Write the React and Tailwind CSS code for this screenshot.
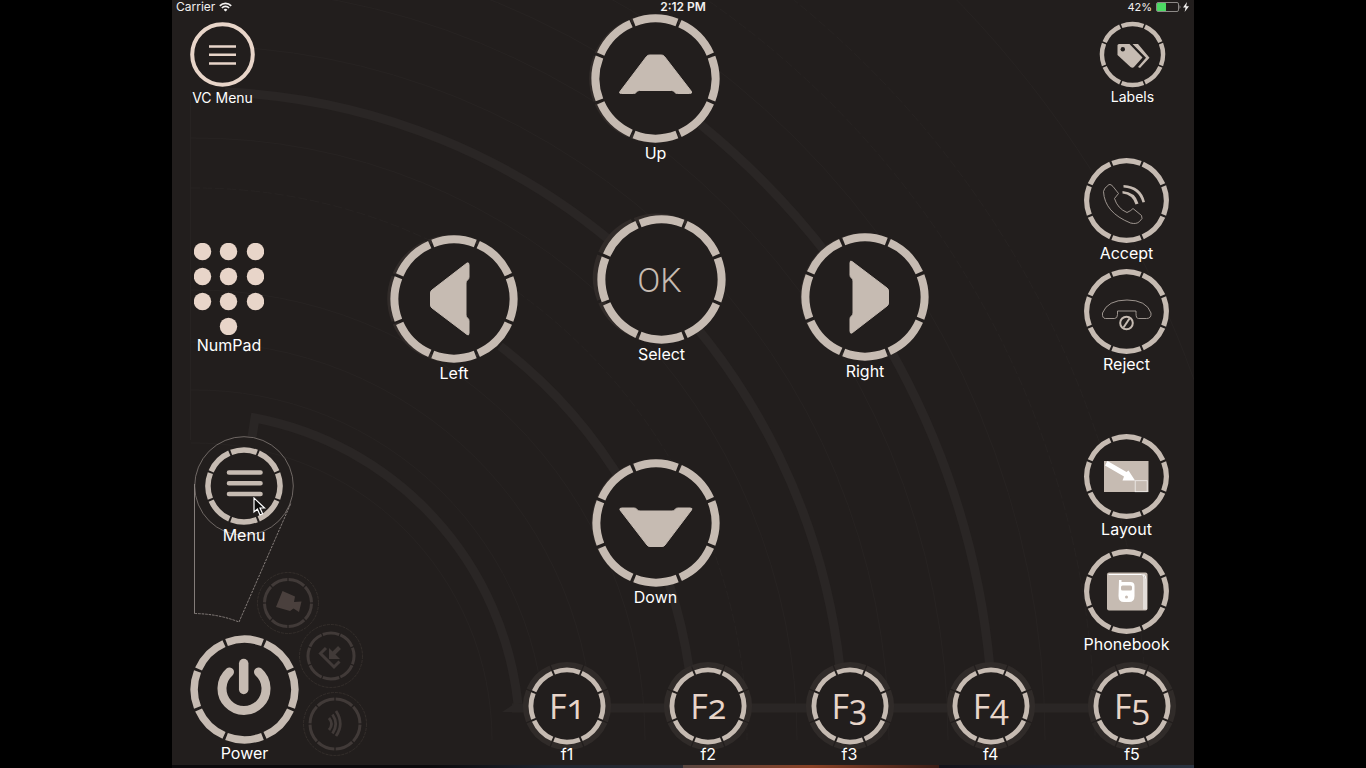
import React from "react";

const SAND = "#c6bbb2";
const PEACH = "#e8d5c9";
const DIM = "#413a38";

function Ring({ size, r, w, color = SAND, turn = 22.5, halo, shade, className = "", children }) {
  const h = size / 2;
  return (
    <svg
      viewBox={`${-h} ${-h} ${size} ${size}`}
      width={size}
      height={size}
      overflow="visible"
      aria-hidden="true"
      className={`col-start-1 row-start-1 block ${className}`}
    >
      {shade && (
        <circle cx={shade[0]} cy={shade[1]} r={r} fill="none" stroke="#312b29" strokeWidth={w} pathLength="800" strokeDasharray="94 6" strokeDashoffset="-3" transform={`rotate(${turn})`} />
      )}
      {halo && (
        <circle r={halo} fill="none" stroke="#302b29" strokeWidth="6" pathLength="800" strokeDasharray="96 4" strokeDashoffset="-2" transform={`rotate(${turn})`} />
      )}
      <circle r={r} fill="#221e1d" stroke="none" />
      <circle r={r} fill="none" stroke={color} strokeWidth={w} pathLength="800" strokeDasharray="93 7" strokeDashoffset="-3.5" transform={`rotate(${turn})`} />
      {children}
    </svg>
  );
}

function Key({ label, className = "", labelClass = "text-base leading-5", children }) {
  return (
    <button type="button" className={`flex flex-col items-center text-white ${className}`}>
      <span className="grid place-items-center">{children}</span>
      <span className={`relative whitespace-nowrap ${labelClass}`}>{label}</span>
    </button>
  );
}

function Arrow({ angle }) {
  return (
    <path
      transform={`rotate(${angle})`}
      d="M-6 -23.500 H6 Q8 -23.500 9 -22 L36 13 Q37 15 34 15 H22 Q20 15 19 13.500 Q18 12 16 12 H-16 Q-18 12 -19 13.500 Q-20 15 -22 15 H-34 Q-37 15 -35.500 13 L-9 -22 Q-8 -23.500 -6 -23.500 Z"
      fill={SAND}
      stroke={SAND}
      strokeWidth="1"
      strokeLinejoin="round"
    />
  );
}

function Backdrop() {
  const thin = [297, 350, 398, 450, 552, 602, 647, 694, 753, 797, 850, 900, 952, 1062];
  return (
    <svg viewBox="172 0 1022 768" preserveAspectRatio="xMidYMid slice" className="absolute inset-0 h-full w-full" aria-hidden="true" fill="none">
      <g stroke="#272322" strokeWidth="1">
        {thin.map((r) => (
          <path key={r} d={`M191 ${740 - r} A${r} ${r} 0 0 1 ${195 + r} 740`} strokeDasharray={r % 4 ? undefined : "9 3"} />
        ))}
        <path d="M190.500 90 V440" />
      </g>
      <g stroke="#2a2625" strokeWidth="9">
        <path d="M252 437 L255 418 A326 326 0 0 1 518 704" />
        <path d="M500 346 A498 498 0 0 1 689 668" />
        <path d="M225 92 A647 647 0 0 1 840 668" />
        <path d="M700 124 A797 797 0 0 1 990 668" />
        <path d="M512 708 H1132" />
      </g>
      <path d="M502 712 L514 704 V712 Z" fill="#2a2625" />
    </svg>
  );
}

function StatusBar() {
  return (
    <header className="relative grid h-3.5 grid-cols-3 items-center px-1 text-xs leading-3.5 text-[#f2f0ef]">
      <div className="flex items-center gap-1">
        <span>Carrier</span>
        <svg width="13" height="10" viewBox="0 0 13 10" fill="none" stroke="#f4f2f1" strokeWidth="1.700" aria-label="Wi-Fi">
          <path d="M0.800 3.800 A8 8 0 0 1 12.200 3.800" />
          <path d="M2.900 6 A5 5 0 0 1 10.100 6" />
          <path d="M6.500 9.600 L4.600 7.700 A2.700 2.700 0 0 1 8.400 7.700 Z" fill="#f4f2f1" stroke="none" />
        </svg>
      </div>
      <div className="text-center font-semibold">2:12 PM</div>
      <div className="flex items-center justify-end gap-1">
        <span className="text-[11px]">42%</span>
        <svg width="34" height="10" viewBox="0 0 34 10" aria-label="Battery">
          <rect x="0.500" y="0.500" width="22" height="9" rx="1.500" fill="none" stroke="#8d8987" />
          <rect x="1" y="1" width="9" height="8" rx="0.500" fill="#4cd964" />
          <path d="M23.500 3 Q25.500 5 23.500 7 Z" fill="#8d8987" />
          <path d="M31 0 L27 5.600 H29.600 L28.600 10 L33 4.200 H30.200 Z" fill="#f4f2f1" />
        </svg>
      </div>
    </header>
  );
}

function LeftRail() {
  return (
    <nav aria-label="System" className="flex w-[195px] shrink-0 flex-col items-start pt-2 pl-[18px]">
      <Key label="VC Menu" labelClass="text-sm leading-5">
        <svg width="65" height="66" viewBox="-32.500 -32.500 65 66" aria-hidden="true">
          <circle r="30.300" fill="#221e1d" stroke={PEACH} strokeWidth="4" />
          <path d="M-13.500 -8 H13.500 M-13.500 0.200 H13.500 M-13.500 9 H13.500" stroke={PEACH} strokeWidth="2.600" />
        </svg>
      </Key>

      <Key label="NumPad" className="mt-[135px] ml-1">
        <svg width="70" height="92" viewBox="194 243 70 92" fill={PEACH} aria-hidden="true">
          {[251.5, 276.5, 301.5].map((y) =>
            [202.5, 228.5, 255.5].map((x) => <circle key={`${x}-${y}`} cx={x} cy={y} r="8.700" />)
          )}
          <circle cx="228.500" cy="326.500" r="8.700" />
        </svg>
      </Key>

      <div className="relative mt-[81px] ml-1 w-[100px] pt-[11px]">
        <svg width="100" height="188" viewBox="194 436 100 188" className="absolute top-0 left-0" fill="none" stroke="#8f8783" strokeWidth="0.900" aria-hidden="true">
          <circle cx="244" cy="486" r="49.300" strokeWidth="0.700" />
          <path d="M194.500 484 V613.500" />
          <path d="M194.500 613.500 Q219 614 239 622 L291 503" strokeDasharray="2.500 1" />
        </svg>
        <Key label="Menu" className="relative mx-auto">
          <Ring size={78} r={36} w={5.5}>
            <path d="M-15 -13.500 H16.500 M-15 -2.700 H16.500 M-15 8 H16.500" stroke={SAND} strokeWidth="4.600" strokeLinecap="round" />
          </Ring>
        </Key>
        <svg width="13" height="20" viewBox="0 0 13 20" className="absolute top-[61px] left-[59px]" aria-hidden="true">
          <path d="M1 1 V15 L4.400 12 L7 18 L9.600 16.800 L7 11 H11.500 Z" fill="#0b0b0b" stroke="#fff" strokeWidth="1.200" />
        </svg>
      </div>

      <button type="button" aria-label="Camera" className="mt-[27px] ml-[67px]">
        <Ring size={62} r={23.5} w={3} color={DIM} turn={0}>
          <circle r="30.500" fill="none" stroke="#38322f" strokeWidth="0.800" strokeDasharray="3 1" />
          <path d="M-5.500 -12 L7 -6.500 L6 -1 L13.500 -1.500 L11 9 L5.500 5.500 L2 8 L-12 4 Z" fill="#4a403d" />
        </Ring>
      </button>

      <div className="-mt-2.5 flex">
        <Key label="Power" className="mt-[11px]" labelClass="-mt-px text-base leading-5">
          <Ring size={109} r={50.3} w={7.5}>
            <path d="M-15 -17.500 A22 22 0 1 0 14 -17.500" fill="none" stroke={SAND} strokeWidth="9" strokeLinecap="round" />
            <path d="M-0.800 -26 V0" stroke={SAND} strokeWidth="9.500" strokeLinecap="round" />
          </Ring>
        </Key>
        <div className="flex flex-col gap-1">
          <button type="button" aria-label="Incoming call" className="block">
            <Ring size={64} r={23} w={3} color={DIM}>
              <circle r="31.500" fill="none" stroke="#38322f" strokeWidth="0.800" strokeDasharray="3 1" />
              <g fill="none" stroke={DIM} strokeWidth="3">
                <path d="M-5 -8 L-10.500 -2.500 L3 11 L8.500 5.500" />
                <path d="M8.500 -8.500 L1 -1" strokeWidth="4" />
              </g>
              <path d="M-2 -8 V3 H9 Z" fill={DIM} />
            </Ring>
          </button>
          <button type="button" aria-label="Sound" className="ml-1 block">
            <Ring size={64} r={25} w={3} color={DIM} turn={0}>
              <circle r="31.500" fill="none" stroke="#38322f" strokeWidth="0.800" strokeDasharray="3 1" />
              <path d="M-6 -6 Q-1 0 -6 6 M-2.500 -9.500 Q4 0 -2.500 9.500 M1 -13 Q9.500 0 1 12" fill="none" stroke={DIM} strokeWidth="2.800" />
            </Ring>
          </button>
        </div>
      </div>
    </nav>
  );
}

function DirectionPad() {
  return (
    <section aria-label="Directions" className="ml-[23px] flex flex-col items-center">
      <div className="pr-2">
        <Key label="Up">
          <Ring size={129} r={60} w={8} shade={[-2, 1]}>
            <Arrow angle={0} />
          </Ring>
        </Key>
      </div>
      <div className="mt-[52px] flex items-start">
        <Key label="Left" className="mt-5">
          <Ring size={128} r={59.5} w={8} shade={[-3, 1]}>
            <Arrow angle={-90} />
          </Ring>
        </Key>
        <Key label="Select" className="mr-[75px] ml-[79px]">
          <Ring size={129} r={60} w={8} shade={[-5, 0]} />
          <span className="relative col-start-1 row-start-1 pr-1 font-[Roboto,sans-serif] text-[34px] leading-10 font-light text-[#c6bbb2]">OK</span>
        </Key>
        <Key label="Right" className="mt-[18px]">
          <Ring size={128} r={59.5} w={8} shade={[-1, 0]}>
            <Arrow angle={90} />
          </Ring>
        </Key>
      </div>
      <div className="mt-[76px] pr-2">
        <Key label="Down">
          <Ring size={128} r={59.5} w={8} shade={[-1, 0]}>
            <Arrow angle={180} />
          </Ring>
        </Key>
      </div>
    </section>
  );
}

function CallRail() {
  return (
    <section aria-label="Calls" className="mr-[25px] flex w-[85px] flex-col items-center pt-2">
      <Key label="Labels" labelClass="text-sm leading-5" className="ml-3">
        <Ring size={65} r={30.5} w={4.5}>
          <path d="M-15 -9 Q-15 -10.500 -13.500 -10.500 H-3 L10 3 L1.500 12.500 Q0 14 -2 12.500 L-15 0.500 Z" fill={SAND} />
          <circle cx="-9.700" cy="-5.300" r="2.200" fill="#221e1d" />
          <path d="M0 -10.500 H5.500 L17 3.200 L7.500 13.500 L5.500 12.500 L13.500 3.200 Z" fill={SAND} />
        </Ring>
      </Key>
      <Key label="Accept" className="mt-[51px]">
        <Ring size={85} r={39.8} w={5.2}>
          <path d="M-17.500 -16 Q-15.500 -16.500 -13.500 -14 L-8 -7 L-12 -2 Q-9 8 0.500 12 Q5 10 6.500 8 L15 15 Q17 18 13 21 Q10 24 4 22.500 Q-22 12 -23 -9 Q-23 -12 -17.500 -16 Z" fill="none" stroke="#aaa19b" strokeWidth="0.900" />
          <path d="M-4 -9.500 Q9 -8.500 12 3 L9 4 Q6 -6 -4 -7 Z" fill={SAND} />
          <path d="M-3 -15.500 Q15 -14.500 18.500 1.500 L16 2 Q12 -12 -3 -13 Z" fill={SAND} />
        </Ring>
      </Key>
      <Key label="Reject" className="mt-1.5">
        <Ring size={85} r={39.8} w={5.2}>
          <path d="M-24 1.500 Q-19 -11.500 0.500 -11.500 Q20 -11.500 24.500 1.500 Q25 7 20 7 H12 Q9.500 7 9.500 2 V-0.500 H-9 V3 Q-9 7 -12 7 H-21 Q-24.500 7 -24 1.500 Z" fill="none" stroke="#aaa19b" strokeWidth="0.900" />
          <circle cy="11.500" r="6.300" fill="#221e1d" stroke={SAND} strokeWidth="2" />
          <path d="M-3 16 L3 7" stroke={SAND} strokeWidth="2" />
        </Ring>
      </Key>
      <Key label="Layout" className="mt-[60px]">
        <Ring size={85} r={39.8} w={5.2}>
          <rect x="-22.500" y="-15.500" width="44.500" height="31" fill={SAND} />
          <path d="M-21.500 -11 L-19 -15.500 L0 -4.500 L2 -6 L8.500 4 H-4 L-2.500 0 Z" fill="#fff" />
          <rect x="8.700" y="4.200" width="12" height="11" fill="none" stroke="#f2efed" strokeWidth="0.800" />
        </Ring>
      </Key>
      <Key label="Phonebook" className="mt-2.5">
        <Ring size={85} r={39.8} w={5.2}>
          <rect x="-19.500" y="-19" width="40.500" height="38" rx="2" fill={SAND} />
          <path d="M-18 -17 H15 Q17.500 -17 17.500 -14 V18 M17 -17.500 Q19.500 -16 19.500 -12 V18" fill="none" stroke="#fff" strokeWidth="1" />
          <path d="M-7.500 -11.500 H-5 V-9.500 H4 Q8 -9.500 8 -5.500 V4.500 Q8 10.500 2.500 10.500 H-2.500 Q-8 10.500 -8 4.500 Z" fill="#fff" />
          <rect x="-5.500" y="-6" width="11" height="5" rx="1.500" fill={SAND} />
          <circle cx="0" cy="5.500" r="1.500" fill={SAND} />
        </Ring>
      </Key>
    </section>
  );
}

function FunctionKeys() {
  return (
    <section aria-label="Function keys" className="mt-2 mr-[18px] ml-[156px] flex justify-between">
      {[1, 2, 3, 4, 5].map((n) => (
        <Key key={n} label={`f${n}`} labelClass="-mt-1.5 text-base leading-5">
          <Ring size={88} r={36} w={4.8} halo={41} />
          <span className="relative col-start-1 row-start-1 font-['Open_Sans',sans-serif] text-[34px] leading-10 text-[#e8d5c9] oldstyle-nums">F{n}</span>
        </Key>
      ))}
    </section>
  );
}

export default function App() {
  return (
    <div className="flex min-h-screen justify-center bg-black font-[Inter,'Liberation_Sans',sans-serif]">
      <main className="relative flex w-full max-w-[1022px] flex-col overflow-hidden bg-[#221e1d]">
        <Backdrop />
        <StatusBar />
        <div className="relative flex grow">
          <LeftRail />
          <div className="flex grow flex-col">
            <div className="flex justify-between">
              <DirectionPad />
              <CallRail />
            </div>
            <FunctionKeys />
          </div>
        </div>
        <div className="relative flex h-[3px] bg-[#0b0a0c]">
          <div className="w-1/4" />
          <div className="w-1/4 bg-linear-to-r from-[#0b0a0c] via-[#1f2631] to-[#2b2c33]" />
          <div className="w-1/4 bg-linear-to-r from-[#5a4640] via-[#8a4226] to-[#3a1d16]" />
          <div className="w-1/4 bg-linear-to-r from-[#14131a] to-[#2a3340]" />
        </div>
      </main>
    </div>
  );
}
